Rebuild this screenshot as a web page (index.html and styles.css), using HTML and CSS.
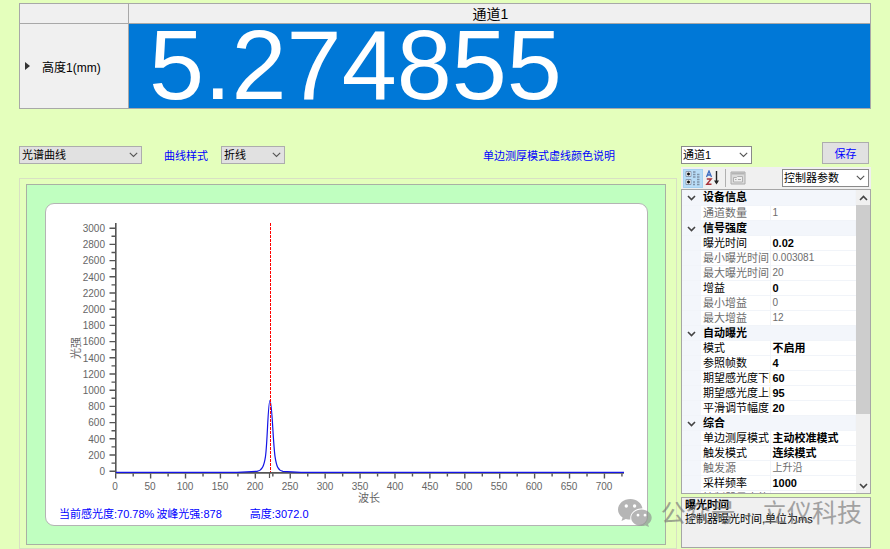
FILE: index.html
```html
<!DOCTYPE html>
<html lang="zh-CN">
<head>
    <meta charset="UTF-8">
    <meta name="viewport" content="width=device-width, initial-scale=1.0">
    <title>光谱测量</title>
    <link rel="stylesheet" href="styles.css">
</head>
<body>
    <!-- 测量结果 -->
    <table class="result-table">
        <thead>
            <tr>
                <th class="corner"></th>
                <th class="channel" scope="col">通道1</th>
            </tr>
        </thead>
        <tbody>
            <tr>
                <th class="row-head" scope="row">
                    <div class="row-title">
                        <svg class="row-arrow" viewBox="0 0 5 8"><path d="M0 0l5 4-5 4z" fill="#333"/></svg>
                        <span>高度1(mm)</span>
                    </div>
                </th>
                <td class="result-value">5.274855</td>
            </tr>
        </tbody>
    </table>

    <main class="main">
        <!-- 左侧：曲线 -->
        <section class="left">
            <div class="toolbar">
                <span class="select curve-select">
                    <select aria-label="曲线类型"><option>光谱曲线</option></select>
                    <svg viewBox="0 0 9 6"><path d="M.8.8l3.7 3.7L8.2.8"/></svg>
                </span>
                <label class="style-label" for="curve-style">曲线样式</label>
                <span class="select style-select">
                    <select id="curve-style"><option>折线</option></select>
                    <svg viewBox="0 0 9 6"><path d="M.8.8l3.7 3.7L8.2.8"/></svg>
                </span>
                <a class="color-help" href="#">单边测厚模式虚线颜色说明</a>
            </div>
            <div class="group-box">
                <div class="chart-panel">
                    <div class="chart-card">
                        <svg class="chart" viewBox="0 0 601 300">
                            <!-- Y轴 -->
                            <g class="tick">
                                <path d="M69.8 19v250" stroke-width="1.6"/>
                                <path d="M66.5 267.9V20" stroke-width="6" stroke-dasharray="1.4 14.8"/>
                                <path d="M67.5 259.8V20" stroke-width="4" stroke-dasharray="1.4 14.8"/>
                            </g>
                            <g class="axis-text y-text">
                                <text x="59" y="28">3000</text>
                                <text x="59" y="44">2800</text>
                                <text x="59" y="60">2600</text>
                                <text x="59" y="77">2400</text>
                                <text x="59" y="93">2200</text>
                                <text x="59" y="109">2000</text>
                                <text x="59" y="125">1800</text>
                                <text x="59" y="141">1600</text>
                                <text x="59" y="158">1400</text>
                                <text x="59" y="174">1200</text>
                                <text x="59" y="190">1000</text>
                                <text x="59" y="206">800</text>
                                <text x="59" y="222">600</text>
                                <text x="59" y="239">400</text>
                                <text x="59" y="255">200</text>
                                <text x="59" y="271">0</text>
                            </g>
                            <!-- X轴 -->
                            <g class="tick">
                                <path d="M69 268.8h509" stroke-width="1.8"/>
                                <path d="M69 272h509" stroke-width="5" stroke-dasharray="1.4 33.51"/>
                                <path d="M86.5 271h491" stroke-width="3" stroke-dasharray="1.4 33.51"/>
                                <path d="M223.5 269v5" stroke-width="1.2"/>
                            </g>
                            <g class="axis-text x-text">
                                <text x="69" y="286">0</text>
                                <text x="104" y="286">50</text>
                                <text x="139" y="286">100</text>
                                <text x="174" y="286">150</text>
                                <text x="209" y="286">200</text>
                                <text x="244" y="286">250</text>
                                <text x="279" y="286">300</text>
                                <text x="314" y="286">350</text>
                                <text x="349" y="286">400</text>
                                <text x="384" y="286">450</text>
                                <text x="418" y="286">500</text>
                                <text x="453" y="286">550</text>
                                <text x="488" y="286">600</text>
                                <text x="523" y="286">650</text>
                                <text x="558" y="286">700</text>
                            </g>
                            <text class="axis-title" x="323" y="298">波长</text>
                            <text class="axis-title" transform="translate(34 144) rotate(-90)">光强</text>
                            <!-- 光谱与峰位 -->
                            <path class="spectrum" d="M70 268.3h121l20-1c5-1 7-5 8.500-15 2-14 2.500-56 4.500-56s3 42 5 56c1.500 10 3 14 8 15l18 1h323"/>
                            <path class="peak-line" d="M224.500 19v249"/>
                        </svg>
                        <div class="status">
                            <span>当前感光度:70.78%</span>
                            <span>波峰光强:878</span>
                            <span class="height-status">高度:3072.0</span>
                        </div>
                    </div>
                </div>
            </div>
        </section>

        <!-- 右侧：参数 -->
        <section class="right">
            <div class="channel-bar">
                <span class="select white-select channel-select">
                    <select aria-label="通道"><option>通道1</option></select>
                    <svg viewBox="0 0 9 6"><path d="M.8.8l3.7 3.7L8.2.8"/></svg>
                </span>
                <button class="save-button" type="button">保存</button>
            </div>
            <div class="prop-toolbar">
                <button class="tool-button active" type="button" aria-label="按分类">
                    <svg viewBox="0 0 16 16">
                        <path d="M1 1.500h5v5H1zM1 9.500h5v5H1z" fill="#fff" stroke="#8a9bb0"/>
                        <path d="M2 4h3M3.500 2.500v3M2 12h3M3.500 10.500v3" stroke="#111" stroke-width="1.600"/>
                        <path d="M8 2h2.500M8 4.500h2.500M8 7h2.500M12 4.500h2.500M12 7h2.500M12 9.500h2.500M8 12h2M8 14.500h2M12 12h2.500M12 14.500h2.500" stroke="#7f93a8" stroke-width="1.300"/>
                    </svg>
                </button>
                <button class="tool-button" type="button" aria-label="按字母">
                    <svg viewBox="0 0 16 16">
                        <path d="M1.500 7L4 1l2.500 6M2.300 5h3.400" fill="none" stroke="#3c6cc0" stroke-width="1.300"/>
                        <path d="M1.800 9h4.400L1.800 14.300h4.700" fill="none" stroke="#a8323a" stroke-width="1.400"/>
                        <path d="M11.500 1v12" stroke="#222" stroke-width="1.400"/>
                        <path d="M9 10.500h5l-2.500 4z" fill="#222"/>
                    </svg>
                </button>
                <span class="separator"></span>
                <button class="tool-button" type="button" aria-label="属性页" disabled>
                    <svg viewBox="0 0 16 16">
                        <path d="M1 2h14v12H1z" fill="#dcdcdc" stroke="#aaa"/>
                        <path d="M1.500 3.500h13" stroke="#b4b4b4" stroke-width="2"/>
                        <path d="M3.500 7.500h3l1-1h5v5.500h-9z" fill="#eee" stroke="#b0b0b0"/>
                        <path d="M5 9.500h1.500M8 9.500h3" stroke="#aaa"/>
                    </svg>
                </button>
                <span class="select white-select object-select">
                    <select aria-label="对象"><option>控制器参数</option></select>
                    <svg viewBox="0 0 9 6"><path d="M.8.8l3.7 3.7L8.2.8"/></svg>
                </span>
            </div>
            <div class="prop-grid">
                <table class="prop-table">
                    <colgroup>
                        <col class="col-gutter">
                        <col class="col-name">
                        <col>
                    </colgroup>
                    <tbody>
                        <tr class="category"><td><svg viewBox="0 0 9 6"><path d="M1 1l3.500 3.500L8 1"/></svg></td><th colspan="2">设备信息</th></tr>
                        <tr class="readonly"><td></td><th>通道数量</th><td>1</td></tr>
                        <tr class="category"><td><svg viewBox="0 0 9 6"><path d="M1 1l3.500 3.500L8 1"/></svg></td><th colspan="2">信号强度</th></tr>
                        <tr><td></td><th>曝光时间</th><td>0.02</td></tr>
                        <tr class="readonly"><td></td><th>最小曝光时间</th><td>0.003081</td></tr>
                        <tr class="readonly"><td></td><th>最大曝光时间</th><td>20</td></tr>
                        <tr><td></td><th>增益</th><td>0</td></tr>
                        <tr class="readonly"><td></td><th>最小增益</th><td>0</td></tr>
                        <tr class="readonly"><td></td><th>最大增益</th><td>12</td></tr>
                        <tr class="category"><td><svg viewBox="0 0 9 6"><path d="M1 1l3.500 3.500L8 1"/></svg></td><th colspan="2">自动曝光</th></tr>
                        <tr><td></td><th>模式</th><td>不启用</td></tr>
                        <tr><td></td><th>参照帧数</th><td>4</td></tr>
                        <tr><td></td><th>期望感光度下限</th><td>60</td></tr>
                        <tr><td></td><th>期望感光度上限</th><td>95</td></tr>
                        <tr><td></td><th>平滑调节幅度</th><td>20</td></tr>
                        <tr class="category"><td><svg viewBox="0 0 9 6"><path d="M1 1l3.500 3.500L8 1"/></svg></td><th colspan="2">综合</th></tr>
                        <tr><td></td><th>单边测厚模式</th><td>主动校准模式</td></tr>
                        <tr><td></td><th>触发模式</th><td>连续模式</td></tr>
                        <tr class="readonly"><td></td><th>触发源</th><td>上升沿</td></tr>
                        <tr><td></td><th>采样频率</th><td>1000</td></tr>
                        <tr class="readonly"><td></td><th>控制器最大能量</th><td>4000</td></tr>
                    </tbody>
                </table>
                <div class="scrollbar">
                    <button type="button" aria-label="向上滚动"><svg viewBox="0 0 9 6"><path d="M1 5l3.500-3.500L8 5"/></svg></button>
                    <div class="thumb"></div>
                    <button class="scroll-down" type="button" aria-label="向下滚动"><svg viewBox="0 0 9 6"><path d="M1 1l3.500 3.500L8 1"/></svg></button>
                </div>
            </div>
            <div class="prop-help">
                <h2>曝光时间</h2>
                <p>控制器曝光时间,单位为ms</p>
            </div>
        </section>

        <!-- 水印 -->
        <div class="watermark">
            <svg viewBox="0 0 34 28">
                <path fill="#8e8e8e" fill-rule="evenodd" d="M12.500 0C5.600 0 0 4.700 0 10.500c0 3.300 1.800 6.200 4.600 8.100L3.500 22l4.300-2.100c1.500.4 3 .7 4.600.7C11.500 14.500 16.500 9.500 24.500 9.300 23.500 4 18.500 0 12.500 0zM8.300 5.300a1.700 1.700 0 110 3.400 1.700 1.700 0 010-3.400zm8.300 0a1.700 1.700 0 110 3.400 1.700 1.700 0 010-3.400z"/>
                <path fill="#8e8e8e" fill-rule="evenodd" d="M23.500 10.500c-5.800 0-10.300 3.700-10.300 8.300s4.500 8.200 10.300 8.200c1.400 0 2.700-.2 3.900-.6l3.600 1.600-1-2.900c2.300-1.500 3.700-3.800 3.700-6.300 0-4.600-4.400-8.300-10.200-8.300zm-3.500 4.300a1.400 1.400 0 110 2.800 1.400 1.400 0 010-2.800zm7 0a1.400 1.400 0 110 2.800 1.400 1.400 0 010-2.800z"/>
            </svg>
            <span>公众号</span>
            <span>·</span>
            <span>立仪科技</span>
        </div>
    </main>
</body>
</html>
```
FILE: styles.css
```css
* {
    margin: 0;
    padding: 0;
    box-sizing: border-box;
}

body {
    min-height: 100vh;
    padding: 3px 19px 0;
    background: #e4ffbc;
    border-bottom: 2px solid #c8ffc0;
    font-family: "Liberation Sans", "Noto Sans CJK SC", sans-serif;
    font-size: 11px;
    color: #000;
}

select,
button {
    font: inherit;
    color: inherit;
}

/* 测量结果 */
.result-table {
    width: 100%;
    border-collapse: collapse;
    background: #f0f0f0;
}

.result-table th,
.result-table td {
    border: 1px solid #a8a8a8;
    font-weight: normal;
}

.corner {
    width: 109px;
}

.channel {
    height: 20px;
    padding-right: 18px;
    font-size: 14px;
    line-height: 18px;
}

.row-title {
    display: flex;
    align-items: center;
    gap: 12px;
    padding-left: 5px;
    font-size: 12px;
}

.row-arrow {
    width: 5px;
    height: 8px;
}

.result-value {
    height: 85px;
    padding-bottom: 2px;
    padding-left: 20px;
    background: #0078d7;
    color: #fff;
    font-size: 99px;
    line-height: 82px;
}

.main {
    position: relative;
    display: flex;
    gap: 4px;
    margin-top: 33px;
}

.left {
    flex: 1;
    display: flex;
    flex-direction: column;
}

.right {
    width: 190px;
    display: flex;
    flex-direction: column;
}

/* 下拉框 */
.select {
    display: inline-grid;
    align-items: center;
    height: 18px;
}

.select select {
    grid-area: 1 / 1;
    width: 100%;
    height: 18px;
    padding-left: 2px;
    appearance: none;
    border: 1px solid #adadad;
    border-radius: 0;
    background: #e1e1e1;
    line-height: 16px;
}

.select svg {
    grid-area: 1 / 1;
    justify-self: end;
    width: 9px;
    height: 6px;
    margin-right: 4px;
    pointer-events: none;
}

.select path {
    fill: none;
    stroke: #555;
    stroke-width: 1.1;
}

.white-select select {
    padding-left: 1px;
    border-color: #8a8a8a;
    background: #fff;
}

/* 曲线工具栏 */
.toolbar {
    display: flex;
    align-items: center;
    height: 18px;
    margin: 4px 0 14px;
    color: #0000ff;
}

.toolbar .select {
    color: #000;
}

.curve-select {
    width: 123px;
}

.style-label {
    margin: 0 13px 0 22px;
}

.style-select {
    width: 64px;
}

.color-help {
    margin-left: auto;
    margin-right: 62px;
    color: #0000ff;
    text-decoration: none;
}

/* 曲线 */
.group-box {
    flex: 1;
    padding: 5px 10px 3px 6px;
    border: 1px solid #d8e0c4;
}

.chart-panel {
    height: 100%;
    padding: 18px 17px 18px 18px;
    border: 1px solid #a9b0a4;
    background: #c0ffc0;
}

.chart-card {
    border: 1px solid #b4b4b4;
    border-radius: 9px;
    background: #fff;
}

.chart {
    display: block;
    width: 100%;
}

.tick path {
    fill: none;
    stroke: #555;
}

.axis-text,
.axis-title {
    fill: #666;
    font-size: 10px;
}

.axis-title {
    font-size: 11px;
    text-anchor: middle;
}

.y-text {
    text-anchor: end;
}

.x-text {
    text-anchor: middle;
}

.spectrum {
    fill: none;
    stroke: #1414e6;
    stroke-width: 1.2;
}

.peak-line {
    fill: none;
    stroke: #f00;
    stroke-width: 1;
    stroke-dasharray: 3 1;
    shape-rendering: crispEdges;
}

.status {
    display: flex;
    gap: 2px;
    padding: 2px 0 3px 13px;
    color: #0000ff;
    line-height: 16px;
}

.height-status {
    margin-left: 26px;
}

/* 参数区 */
.channel-bar {
    display: flex;
    align-items: flex-end;
    justify-content: space-between;
    padding-right: 2px;
}

.channel-select {
    width: 71px;
}

.save-button {
    width: 47px;
    height: 22px;
    border: 1px solid #adadad;
    background: #e1e1e1;
    color: #0000ff;
}

.prop-toolbar {
    display: flex;
    align-items: center;
    height: 22px;
    margin-top: 3px;
    padding: 0 2px;
    background: #f0f0f0;
}

.tool-button {
    display: flex;
    align-items: center;
    justify-content: center;
    width: 20px;
    height: 19px;
    border: 1px solid transparent;
    background: none;
}

.tool-button svg {
    width: 16px;
    height: 16px;
}

.tool-button.active {
    border-color: #a5d2f2;
    background: #b8dcf6;
}

.separator {
    width: 1px;
    height: 18px;
    margin: 0 2px;
    background: #b0b0b0;
}

.object-select {
    width: 87px;
    margin-left: auto;
}

.prop-grid {
    display: flex;
    height: 305px;
    border: 1px solid #a6a6a6;
    background: #fff;
    overflow: hidden;
}

.prop-table {
    flex: 1;
    table-layout: fixed;
    width: 100%;
    height: 315px;
    border-collapse: collapse;
}

.col-gutter {
    width: 19px;
}

.col-name {
    width: 69px;
}

.prop-table th,
.prop-table td {
    height: 15px;
    padding-left: 2px;
    border-bottom: 1px solid #f1f4f9;
    line-height: 14px;
    text-align: left;
    white-space: nowrap;
    overflow: hidden;
}

.prop-table th {
    border-right: 1px solid #f1f4f9;
    font-weight: normal;
}

.prop-table td {
    font-weight: bold;
}

.prop-table td:first-child {
    padding: 0;
    background: #f3f6fb;
    text-align: center;
}

.prop-table .category th {
    background: #f3f6fb;
    font-weight: bold;
}

.prop-table .readonly {
    color: #6d6d6d;
}

.prop-table .readonly td {
    font-size: 10px;
    font-weight: normal;
}

.prop-table svg,
.scrollbar svg {
    width: 9px;
    height: 6px;
}

.prop-table path,
.scrollbar path {
    fill: none;
    stroke: #444;
    stroke-width: 1.6;
}

.scrollbar {
    display: flex;
    flex-direction: column;
    width: 14px;
    background: #f0f0f0;
}

.scrollbar button {
    display: flex;
    align-items: center;
    justify-content: center;
    height: 15px;
    border: none;
    background: none;
}

.thumb {
    height: 209px;
    background: #cdcdcd;
}

.scroll-down {
    margin-top: auto;
}

.prop-help {
    height: 51px;
    margin-top: 3px;
    padding: 0 3px;
    border: 1px solid #a6a6a6;
    background: #f0f0f0;
    line-height: 14px;
}

.prop-help h2 {
    font-size: 11px;
}

/* 水印 */
.watermark {
    position: absolute;
    right: 9px;
    bottom: 20px;
    display: flex;
    align-items: center;
    gap: 9px;
    color: #777;
    font-size: 25px;
    line-height: 32px;
    opacity: 0.65;
    pointer-events: none;
}

.watermark svg {
    width: 34px;
    height: 28px;
}
```
